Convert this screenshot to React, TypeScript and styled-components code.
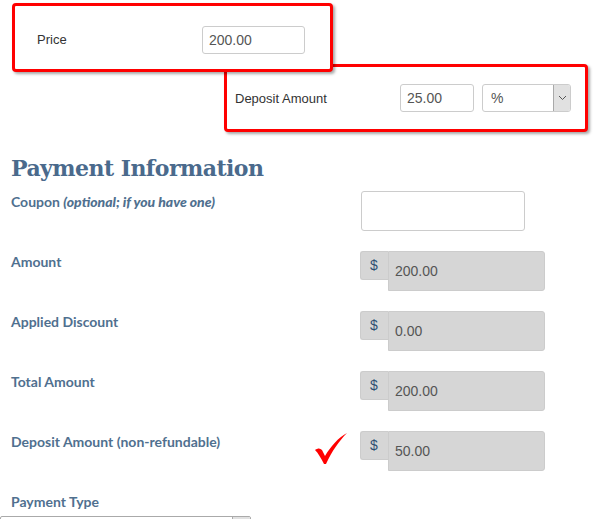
import React from "react";
import styled, { createGlobalStyle } from "styled-components";

const GlobalStyle = createGlobalStyle`
  html, body {
    margin: 0;
    padding: 0;
    background: #ffffff;
    overflow: hidden;
  }
  body {
    font-family: "Liberation Sans", Arial, sans-serif;
  }
`;

const Page = styled.div`
  width: 593px;
  height: 519px;
  overflow: hidden;
`;

const Callout = styled.div<{ $left: number; $width: number; $height: number; $top: number; $raised?: boolean; $pad: number }>`
  position: relative;
  z-index: ${(p) => (p.$raised ? 2 : 1)};
  box-sizing: border-box;
  margin-left: ${(p) => p.$left}px;
  margin-top: ${(p) => p.$top}px;
  width: ${(p) => p.$width}px;
  height: ${(p) => p.$height}px;
  border: 3px solid #ff0000;
  border-radius: 4px;
  background: #ffffff;
  box-shadow: 2px 2px 3px rgba(0, 0, 0, 0.35);
  display: flex;
  align-items: center;
  padding-left: ${(p) => p.$pad}px;
  padding-top: ${(p) => (p.$raised ? 4 : 0)}px;
`;

const CalloutLabel = styled.span`
  width: 165px;
  font-size: 13px;
  color: #333333;
`;

const TextBox = styled.div<{ $width: number }>`
  box-sizing: border-box;
  width: ${(p) => p.$width}px;
  height: 28px;
  border: 1px solid #cccccc;
  border-radius: 3px;
  padding: 0 6px;
  font-size: 14px;
  line-height: 26px;
  color: #555555;
  background: #ffffff;
`;

const SelectBox = styled.div`
  box-sizing: border-box;
  margin-left: 8px;
  width: 89px;
  height: 28px;
  border: 1px solid #cccccc;
  border-radius: 3px;
  display: flex;
  font-size: 14px;
  color: #555555;
  background: #ffffff;
  overflow: hidden;
`;

const SelectValue = styled.span`
  flex: 1;
  padding-left: 8px;
  line-height: 26px;
`;

const SelectArrow = styled.span`
  width: 16px;
  display: flex;
  align-items: center;
  justify-content: center;
  background: #e1e1e1;
  border-left: 1px solid #a9a9a9;
  color: #555555;
`;

const Heading = styled.h2`
  margin: 21px 0 0 11px;
  font-family: "DejaVu Serif", Georgia, serif;
  font-weight: bold;
  font-size: 22px;
  line-height: 30px;
  color: #4a6a8c;
  letter-spacing: -0.55px;
`;

const Form = styled.div`
  margin-top: 8px;
  padding-left: 11px;
  display: grid;
  grid-template-columns: 349px 1fr;
  grid-auto-rows: 60px;
`;

const LabelCell = styled.div`
  display: flex;
  justify-content: space-between;
  align-items: flex-start;
  padding-right: 12px;
`;

const Label = styled.span`
  margin-top: 2px;
  font-family: Lato, "Open Sans", sans-serif;
  font-weight: bold;
  font-size: 14px;
  line-height: 18px;
  color: #50708f;
`;

const Hint = styled.em`
  font-style: italic;
  font-weight: 900;
`;

const FieldCell = styled.div`
  display: flex;
  align-items: flex-start;
`;

const Coupon = styled.div`
  box-sizing: border-box;
  margin-left: 1px;
  width: 164px;
  height: 40px;
  border: 1px solid #cccccc;
  border-radius: 3px;
  background: #ffffff;
`;

const Addon = styled.span`
  box-sizing: border-box;
  width: 28px;
  height: 29px;
  border: 1px solid #cccccc;
  border-right: none;
  border-radius: 3px 0 0 3px;
  background: #d6d6d6;
  font-size: 14px;
  line-height: 27px;
  padding-left: 9px;
  color: #2e4f73;
`;

const Disabled = styled.span`
  box-sizing: border-box;
  width: 157px;
  height: 40px;
  border: 1px solid #cccccc;
  border-radius: 0 3px 3px 0;
  background: #d6d6d6;
  font-size: 14px;
  line-height: 38px;
  padding-left: 6px;
  color: #555555;
`;

const Check = styled.svg`
  margin-top: 1px;
  width: 34px;
  height: 33px;
`;

const PaymentCell = styled.div`
  grid-column: 1 / -1;
  margin-left: -11px;
  display: flex;
  flex-direction: column;
  align-items: flex-start;
  gap: 5px;
`;

const PaymentLabel = styled(Label)`
  margin-left: 11px;
`;

const PaymentSelect = styled.div`
  box-sizing: border-box;
  width: 251px;
  height: 30px;
  border: 1px solid #aaaaaa;
  border-radius: 2px;
  display: flex;
  justify-content: flex-end;
`;

const PaymentArrow = styled.span`
  width: 17px;
  background: #e1e1e1;
  border-left: 1px solid #aaaaaa;
`;

const Chevron = () => (
  <svg width="9" height="6" viewBox="0 0 9 6">
    <path d="M1 1 L4.5 4.5 L8 1" fill="none" stroke="#555" strokeWidth="1" />
  </svg>
);

const rows = [
  { label: "Amount", value: "200.00" },
  { label: "Applied Discount", value: "0.00" },
  { label: "Total Amount", value: "200.00" },
  { label: "Deposit Amount (non-refundable)", value: "50.00", checked: true },
];

export default function App() {
  return (
    <Page>
      <GlobalStyle />
      <Callout $left={12} $top={3} $width={321} $height={69} $pad={22} $raised>
        <CalloutLabel>Price</CalloutLabel>
        <TextBox $width={103}>200.00</TextBox>
      </Callout>
      <Callout $left={224} $top={-8} $width={364} $height={68} $pad={8}>
        <CalloutLabel>Deposit Amount</CalloutLabel>
        <TextBox $width={74}>25.00</TextBox>
        <SelectBox>
          <SelectValue>%</SelectValue>
          <SelectArrow>
            <Chevron />
          </SelectArrow>
        </SelectBox>
      </Callout>

      <Heading>Payment Information</Heading>

      <Form>
        <LabelCell>
          <Label>
            Coupon <Hint>(optional; if you have one)</Hint>
          </Label>
        </LabelCell>
        <FieldCell>
          <Coupon />
        </FieldCell>

        {rows.map((r) => (
          <React.Fragment key={r.label}>
            <LabelCell>
              <Label>{r.label}</Label>
              {r.checked && (
                <Check viewBox="0 0 34 33">
                  <path
                    d="M1 18 C4 16 6 16 8 18 L11 24 C17 14 24 6 33 1 C25 9 18 19 12 32 L10 32 C7 26 4 21 1 18 Z"
                    fill="#ff0000"
                  />
                </Check>
              )}
            </LabelCell>
            <FieldCell>
              <Addon>$</Addon>
              <Disabled>{r.value}</Disabled>
            </FieldCell>
          </React.Fragment>
        ))}

        <PaymentCell>
          <PaymentLabel>Payment Type</PaymentLabel>
          <PaymentSelect>
            <PaymentArrow />
          </PaymentSelect>
        </PaymentCell>
      </Form>
    </Page>
  );
}
